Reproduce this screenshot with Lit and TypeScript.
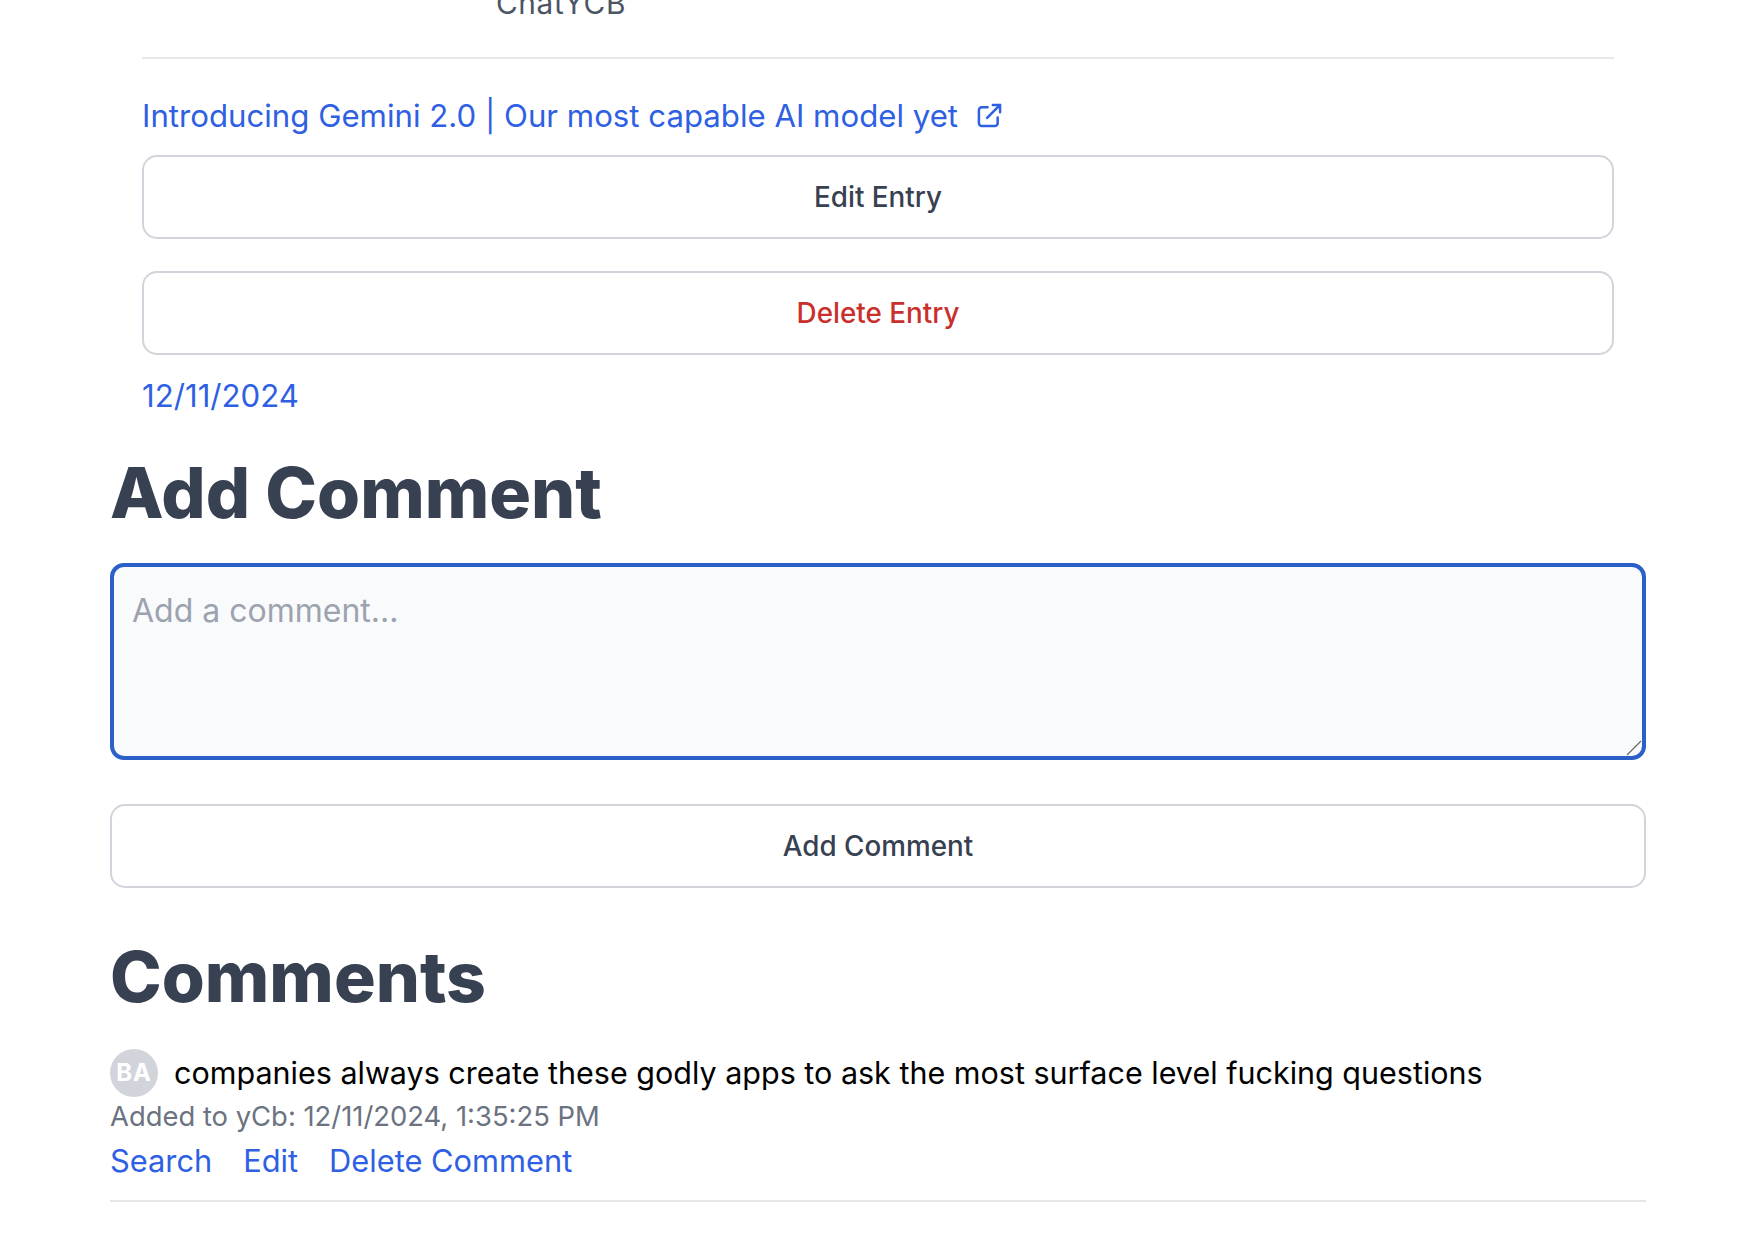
import { LitElement, html, css } from "lit";
import { customElement } from "lit/decorators.js";

@customElement("app-root")
export class AppRoot extends LitElement {
  static styles = css`
    :host {
      display: block;
      height: 1234px;
      overflow: hidden;
      background: #fff;
      font-family: Inter, "Noto Sans", sans-serif;
      font-size: 30.8px;
      line-height: 44.6px;
      color: #374151;
      box-sizing: border-box;
      padding: 0 102px 0 110px;
    }
    .entry { padding: 0 32px; }
    .source {
      margin-top: -19px;
      height: 44px;
      padding-left: 354px;
      color: #4b5563;
      font-size: 29.8px;
      letter-spacing: 0.6px;
    }
    .rule { height: 2px; background: #e5e7eb; }
    .entry .rule { margin-top: 32px; }
    a { color: #2f5fe3; text-decoration: none; }
    .title {
      margin-top: 35px;
      display: flex;
      align-items: center;
      gap: 19px;
      font-size: 31.2px;
    }
    .title svg { width: 25px; height: 25px; flex: none; margin-bottom: 2px; }
    .btn {
      display: block;
      width: 100%;
      height: 84px;
      box-sizing: border-box;
      border: 2px solid #d1d5db;
      border-radius: 15px;
      background: #fff;
      font: 500 27.8px Inter, sans-serif;
      color: #374151;
      text-align: center;
      padding: 0;
    }
    .title + .btn { margin-top: 16px; }
    .btn.danger { margin-top: 32px; color: #c9302c; }
    .date { display: block; margin-top: 19px; font-size: 31.2px; }
    h2 {
      margin: 0;
      font-size: 69.6px;
      line-height: 80px;
      font-weight: 800;
      color: #374151;
    }
    .add { margin-top: 35px; }
    .box { position: relative; margin-top: 30px; height: 197px; }
    textarea {
      display: block;
      width: 100%;
      height: 100%;
      box-sizing: border-box;
      border: 4px solid #2a60c8;
      border-radius: 14px;
      background: #f9fafb;
      padding: 22px 18px 18px;
      margin: 0;
      outline: none;
      resize: none;
      font: 400 32px/44.6px Inter, sans-serif;
    }
    textarea::placeholder { color: #9ca3af; opacity: 1; }
    .grip { position: absolute; right: 4px; bottom: 4px; width: 16px; height: 16px; }
    .submit { margin-top: 44px; }
    .list { margin-top: 49px; }
    .comment { margin-top: 32px; }
    .line { display: flex; align-items: center; gap: 16px; color: #000; height: 48px; font-size: 30.5px; }
    .avatar {
      width: 48px;
      height: 48px;
      border-radius: 50%;
      background: #d1d5db;
      color: #fff;
      font-weight: 700;
      font-size: 24px;
      letter-spacing: 0.8px;
      text-align: center;
      line-height: 48px;
      flex: none;
    }
    .meta { font-size: 27.4px; color: #6b7280; line-height: 38px; }
    .actions { display: flex; gap: 31px; margin-top: 4px; }
    .comment .rule { margin-top: 16px; }
  `;

  render() {
    return html`
      <div class="entry">
        <div class="source">ChatYCB</div>
        <div class="rule"></div>
        <a class="title" href="#">
          <span>Introducing Gemini 2.0 | Our most capable AI model yet</span>
          <svg viewBox="0 0 26 26" fill="none" stroke="currentColor" stroke-width="2.6" stroke-linecap="round" stroke-linejoin="round">
            <path d="M11 4.5H5a3 3 0 0 0-3 3V21a3 3 0 0 0 3 3h13.5a3 3 0 0 0 3-3v-6" />
            <path d="M10.5 15.5 24 2M16.5 2H24v7.5" />
          </svg>
        </a>
        <button class="btn">Edit Entry</button>
        <button class="btn danger">Delete Entry</button>
        <a class="date" href="#">12/11/2024</a>
      </div>
      <h2 class="add">Add Comment</h2>
      <div class="box">
        <textarea placeholder="Add a comment..."></textarea>
        <svg class="grip" viewBox="0 0 16 16"><path d="M1 15 15 1" stroke="#6b6b6b" stroke-width="1.2" /></svg>
      </div>
      <button class="btn submit">Add Comment</button>
      <h2 class="list">Comments</h2>
      <div class="comment">
        <div class="line">
          <span class="avatar">BA</span>
          <span>companies always create these godly apps to ask the most surface level fucking questions</span>
        </div>
        <div class="meta">Added to yCb: 12/11/2024, 1:35:25 PM</div>
        <div class="actions">
          <a href="#">Search</a><a href="#">Edit</a><a href="#">Delete Comment</a>
        </div>
        <div class="rule"></div>
      </div>
    `;
  }
}
